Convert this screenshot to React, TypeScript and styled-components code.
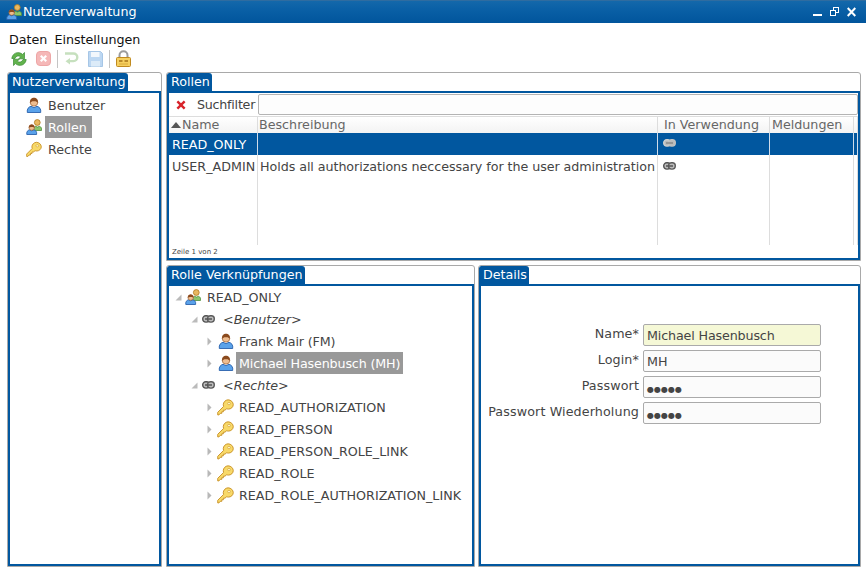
import React from "react";
import styled, { createGlobalStyle } from "styled-components";

const BLUE = "#01579f";

const Global = createGlobalStyle`
  html, body { margin: 0; padding: 0; background: #fff; }
  body { font-family: "DejaVu Sans", Verdana, sans-serif; font-size: 12.7px; color: #444; }
`;

const Page = styled.div`
  width: 866px; height: 573px; display: flex; flex-direction: column; overflow: hidden; background: #fff;
`;
const TitleBar = styled.div`
  height: 23px; flex: none; display: flex; align-items: center; padding: 0 6px; gap: 1px;
  background: linear-gradient(#4a7096 0, #1468aa 1px, #0a60a6 40%, #01559c 100%);
  color: #fff;
`;
const TitleText = styled.span`flex: 1; line-height: 23px;`;
const WinButtons = styled.div`display: flex; align-items: center; gap: 8px; margin-right: 4px;`;
const MenuBar = styled.div`
  display: flex; gap: 7px; padding: 9px 9px 0; height: 15px; flex: none; line-height: 15px; color: #111;
`;
const ToolBar = styled.div`
  display: flex; align-items: center; padding: 1px 0 0 11px; height: 21px; flex: none;
`;
const ToolBtn = styled.div<{ $w: number }>`
  width: ${(p) => p.$w}px; height: 18px; display: flex; align-items: center; flex: none;
`;
const ToolSep = styled.div`width: 1px; height: 18px; background: #c4c4c4; margin: 0 6px;`;

const Main = styled.div`
  flex: 1; display: grid; grid-template-columns: 155px 695px; gap: 4px; padding: 3px 0 6px 7px; min-height: 0;
`;
const RightCol = styled.div`
  display: grid; grid-template-rows: 189px 1fr; gap: 4px; min-height: 0;
`;
const BottomRow = styled.div`
  display: grid; grid-template-columns: 309px 383px; gap: 3px; min-height: 0;
`;
const Panel = styled.section`
  display: flex; flex-direction: column; border: 1px solid #a9a9a9; border-radius: 3px 3px 0 0;
  min-height: 0; min-width: 0; overflow: hidden; background: #fff;
`;
const TabRow = styled.div`
  height: 18px; display: flex; flex: none;
`;
const Tab = styled.div`
  background: ${BLUE}; color: #fff; padding: 0 2px 0 4px; line-height: 18px; height: 18px;
  border-top-left-radius: 2px; border-top-right-radius: 3px; white-space: nowrap;
`;
const PanelBody = styled.div`
  flex: 1; border: 2px solid ${BLUE}; min-height: 0; display: flex; flex-direction: column;
  background: #fff; overflow: hidden;
`;

const NavList = styled.div`display: flex; flex-direction: column; padding: 1px 0 0 16px;`;
const NavRow = styled.div`height: 22px; display: flex; align-items: center; gap: 3px;`;
const NavIcon = styled.div`width: 16px; flex: none; display: flex; align-items: center;`;
const NavLabel = styled.span<{ $sel?: boolean }>`
  padding: 0 5px 0 3px; height: 22px; line-height: 24px;
  background: ${(p) => (p.$sel ? "#999" : "transparent")}; color: ${(p) => (p.$sel ? "#fff" : "#444")};
`;

const FilterBar = styled.div`
  height: 24px; flex: none; display: flex; align-items: center; box-sizing: border-box; border-bottom: 1px solid #ddd; padding-left: 7px;
`;
const FilterX = styled.div`width: 21px; display: flex; align-items: center; flex: none;`;
const FilterLabel = styled.span`margin: 0 3px 1px 0; letter-spacing: -0.25px;`;
const FilterInput = styled.div`
  flex: 1; height: 21px; border: 1px solid #b4b4b4; border-radius: 2px; background: #fdfdfd; box-sizing: border-box;
`;
const Table = styled.div`
  display: grid; grid-template-columns: 89px 400px 112px 84px 4px; flex: none;
`;
const HeadCell = styled.div<{ $pad?: number }>`
  height: 16px; line-height: 16px; padding-left: ${(p) => p.$pad ?? 2}px; color: #666; border-right: 1px solid #ddd; white-space: nowrap;
  background: linear-gradient(#fff, #f3f3f3); overflow: hidden; display: flex; align-items: center;
`;
const SortArrow = styled.span`
  width: 0; height: 0; border: 5px solid transparent; border-bottom: 6px solid #555; border-top: 0; margin-right: 1px;
`;
const Cell = styled.div<{ $sel?: boolean; $h: number; $pad?: number }>`
  height: ${(p) => p.$h}px; line-height: 24px; padding-left: ${(p) => p.$pad ?? 3}px;
  white-space: nowrap; overflow: hidden; box-sizing: border-box;
  border-right: 1px solid ${(p) => (p.$sel ? "#cfdcea" : "#ddd")};
  background: ${(p) => (p.$sel ? BLUE : "#fff")}; color: ${(p) => (p.$sel ? "#fff" : "#444")};
`;
const DescText = styled.span`letter-spacing: -0.06px;`;
const LinkCell = styled(Cell)`
  display: flex; align-items: flex-start; padding-left: 5px; padding-top: ${(p) => (p.$sel ? 6 : 7)}px;
`;
const FootText = styled.div`
  font-size: 7px; height: 14px; line-height: 14px; padding-left: 3px; color: #444; margin-top: auto;
`;

const Tree = styled.div`display: flex; flex-direction: column;`;
const TreeRow = styled.div<{ $level: number }>`
  height: 22px; display: flex; align-items: center; padding-left: ${(p) => 6 + p.$level * 16}px; white-space: nowrap;
`;
const Twisty = styled.div`width: 10px; display: flex; align-items: center; flex: none;`;
const TreeIcon = styled.div<{ $off?: number }>`
  width: 19px; box-sizing: border-box; padding-left: ${(p) => p.$off ?? 0}px; display: flex; align-items: center; flex: none;
`;
const TreeLabel = styled.span<{ $sel?: boolean; $group?: boolean }>`
  padding: 0 3px; height: 22px; line-height: 24px;
  font-style: ${(p) => (p.$group ? "italic" : "normal")};
  background: ${(p) => (p.$sel ? "#999" : "transparent")}; color: ${(p) => (p.$sel ? "#fff" : "#444")};
`;
const NameText = styled.span`letter-spacing: -0.14px;`;

const Form = styled.div`
  display: grid; grid-template-columns: 153px 178px; column-gap: 4px; row-gap: 4px; padding: 38px 0 0 5px;
`;
const FieldLabel = styled.label`
  text-align: right; color: #444; line-height: 22px; white-space: nowrap; height: 22px; margin-top: -1px; letter-spacing: 0.12px;
`;
const Field = styled.div<{ $req?: boolean }>`
  height: 22px; box-sizing: border-box; border: 1px solid #aaa; border-radius: 2px; padding-left: 3px; line-height: 21px;
  background: ${(p) => (p.$req ? "#f5f8d6" : "#fbfbfb")}; color: #444;
`;
const PassDots = styled.span`font-size: 8px; line-height: 21px; color: #444;`;

const Person = () => (
  <svg width="16" height="16" viewBox="0 0 16 16">
    <path d="M1.300 15.500c-.6-3.700 1.400-5.600 3.700-6.200l3 1.300 3-1.300c2.300.6 4.300 2.500 3.700 6.200z" fill="#5aa2ea" stroke="#2a62ad" strokeWidth=".9" />
    <circle cx="8" cy="5.300" r="3.800" fill="#eebd90" stroke="#9a5c2c" strokeWidth=".7" />
    <path d="M4.200 6C3.600 2.500 5.800.7 8 .7s4.400 1.800 3.800 5.300C11 4.500 9.500 4 8 4.200 6.500 4 5 4.500 4.200 6z" fill="#8a4a1e" />
  </svg>
);
const Roles = () => (
  <svg width="16" height="16" viewBox="0 0 16 16">
    <path d="M7.500 11.500c-.3-2.500 1-3.800 2-4.200l2 .8 2-.8c1.300.4 2.500 1.700 2 4.200z" fill="#8cc56c" stroke="#4e9040" strokeWidth=".8" />
    <circle cx="11.300" cy="3.500" r="2.900" fill="#e8b860" stroke="#b07820" strokeWidth=".8" />
    <path d="M.8 15.500c-.5-2.800 1-4.300 2.700-4.700l2.200 1 2.200-1c1.700.4 3.200 1.900 2.700 4.700z" fill="#5aa2ea" stroke="#2a62ad" strokeWidth=".9" />
    <circle cx="5.700" cy="8.500" r="2.800" fill="#eebd90" stroke="#9a5c2c" strokeWidth=".6" />
    <path d="M2.900 8.800C2.600 6.500 4.300 5.400 5.700 5.400s3.100 1.100 2.800 3.400C7.500 7.700 4 7.700 2.900 8.800z" fill="#8a4a1e" />
  </svg>
);
const Key = () => (
  <svg width="17" height="17" viewBox="0 0 16 16">
    <path d="M10.500.8c2.600 0 4.800 2.200 4.800 4.500s-2.200 4.200-4.500 4.200c-.7 0-1.200-.1-1.700-.3L7.500 10.500H6V12H4.500v1.500H3L1.800 15H.7v-2.500L6.200 7c-.2-.5-.3-1-.3-1.600C5.900 3 8 .8 10.500.8z" fill="#f8d968" stroke="#c8922a" strokeWidth=".9" />
    <ellipse cx="11.300" cy="4.300" rx="1.400" ry="1.100" fill="#fff6c4" stroke="#c8922a" strokeWidth=".5" />
  </svg>
);
const Chain = ({ light }: { light?: boolean }) => (
  <svg width="13" height="8" viewBox="0 0 13 8">
    <rect x=".7" y=".8" width="6.800" height="6.300" rx="3" fill="#bbb" stroke={light ? "#d0d0d0" : "#555"} strokeWidth="1.400" />
    <rect x="5.500" y=".8" width="6.800" height="6.300" rx="3" fill="#bbb" stroke={light ? "#c0c0c0" : "#5c5c5c"} strokeWidth="1.400" />
    <path d="M3 4h7" stroke={light ? "#8a8a8a" : "#555"} strokeWidth="1.300" />
  </svg>
);
const Twist = ({ open }: { open?: boolean }) =>
  open ? (
    <svg width="7" height="7" viewBox="0 0 7 7"><path d="M6.500.5v6h-6z" fill="#bbb" /></svg>
  ) : (
    <svg width="5" height="9" viewBox="0 0 5 9"><path d="M.5.5l4 4-4 4z" fill="#b8b8b8" /></svg>
  );
const RedX = () => (
  <svg width="10" height="10" viewBox="0 0 10 10"><path d="M.5 2.200L2.200.5 5 3.300 7.800.5 9.500 2.200 6.700 5l2.800 2.800-1.700 1.700L5 6.700 2.200 9.500.5 7.800 3.300 5z" fill="#d8232a" /></svg>
);
const Refresh = () => (
  <svg width="16" height="16" viewBox="0 0 16 16">
    <path d="M.8 7.500C1.300 3.500 4.500 1.200 8 1.700c1.500.2 2.600.8 3.500 1.700L13.500 1.500v6.300H7.700L9.700 5.800C8.800 5 7.300 4.600 6 5.200 5 5.700 4.300 6.500 4 7.500z" fill="#62b34c" stroke="#3a8a33" strokeWidth=".7" />
    <path d="M15.200 8.500c-.5 4-3.700 6.300-7.200 5.800-1.500-.2-2.600-.8-3.500-1.700L2.500 14.500V8.200h5.800l-2 2c.9.800 2.400 1.200 3.700.6 1-.5 1.700-1.300 2-2.300z" fill="#62b34c" stroke="#3a8a33" strokeWidth=".7" />
  </svg>
);
const StopOff = () => (
  <svg width="15" height="15" viewBox="0 0 15 15">
    <rect x=".5" y=".5" width="14" height="14" rx="3.500" fill="#f5b8b8" stroke="#eda6a6" />
    <path d="M4 5.500l1.500-1.500 2 2 2-2 1.500 1.500-2 2 2 2-1.500 1.500-2-2-2 2L4 9.500l2-2z" fill="#fff" />
  </svg>
);
const UndoOff = () => (
  <svg width="15" height="15" viewBox="0 0 15 15">
    <path d="M1 2.500h8.500a3.800 3.800 0 0 1 0 7.600H5" fill="none" stroke="#c6e0be" strokeWidth="2.400" />
    <path d="M6 7v6.500L1.500 10.200z" fill="#c6e0be" />
  </svg>
);
const SaveOff = () => (
  <svg width="15" height="16" viewBox="0 0 15 16">
    <path d="M.5.500h12l2 2v13H.5z" fill="#bcd7f2" stroke="#a6c6e6" />
    <rect x="3" y="1" width="8.500" height="5" fill="#f2f7fc" />
    <rect x="3" y="10" width="9" height="5.500" fill="#dcebf8" />
  </svg>
);
const Lock = () => (
  <svg width="15" height="17" viewBox="0 0 15 17">
    <path d="M3.500 8V5.200a4 4 0 0 1 8 0V8" fill="none" stroke="#9c9c9c" strokeWidth="2" />
    <rect x=".5" y="7.500" width="14" height="9" rx="1" fill="#f6d060" stroke="#c08a20" />
    <rect x="3" y="10" width="3.500" height="2" fill="#b98a2a" />
    <rect x="8.500" y="10" width="3.500" height="2" fill="#b98a2a" />
    <rect x="3" y="13.500" width="9" height="1" fill="#d9a93a" />
  </svg>
);

const people = ["Frank Mair (FM)", "Michael Hasenbusch (MH)"];
const rights = ["READ_AUTHORIZATION", "READ_PERSON", "READ_PERSON_ROLE_LINK", "READ_ROLE", "READ_ROLE_AUTHORIZATION_LINK"];

export default function App() {
  return (
    <Page>
      <Global />
      <TitleBar>
        <Roles />
        <TitleText>Nutzerverwaltung</TitleText>
        <WinButtons>
          <svg width="9" height="10" viewBox="0 0 9 10"><rect x="0" y="7" width="9" height="2" fill="#fff" /></svg>
          <svg width="9" height="10" viewBox="0 0 9 10"><rect x="3.500" y=".5" width="5" height="5" fill="none" stroke="#fff" /><rect x=".5" y="3.500" width="5" height="5" fill="#01589f" stroke="#fff" /></svg>
          <svg width="9" height="10" viewBox="0 0 9 10"><path d="M.7 1l7.600 8M8.300 1L.7 9" stroke="#fff" strokeWidth="2" /></svg>
        </WinButtons>
      </TitleBar>
      <MenuBar><span>Daten</span><span>Einstellungen</span></MenuBar>
      <ToolBar>
        <ToolBtn $w={25}><Refresh /></ToolBtn>
        <ToolBtn $w={15}><StopOff /></ToolBtn>
        <ToolSep />
        <ToolBtn $w={24}><UndoOff /></ToolBtn>
        <ToolBtn $w={15}><SaveOff /></ToolBtn>
        <ToolSep />
        <ToolBtn $w={15}><Lock /></ToolBtn>
      </ToolBar>
      <Main>
        <Panel>
          <TabRow><Tab>Nutzerverwaltung</Tab></TabRow>
          <PanelBody>
            <NavList>
              <NavRow><NavIcon><Person /></NavIcon><NavLabel>Benutzer</NavLabel></NavRow>
              <NavRow><NavIcon><Roles /></NavIcon><NavLabel $sel>Rollen</NavLabel></NavRow>
              <NavRow><NavIcon><Key /></NavIcon><NavLabel>Rechte</NavLabel></NavRow>
            </NavList>
          </PanelBody>
        </Panel>
        <RightCol>
          <Panel>
            <TabRow><Tab>Rollen</Tab></TabRow>
            <PanelBody>
              <FilterBar>
                <FilterX><RedX /></FilterX>
                <FilterLabel>Suchfilter</FilterLabel>
                <FilterInput />
              </FilterBar>
              <Table>
                <HeadCell><SortArrow />Name</HeadCell>
                <HeadCell $pad={1}>Beschreibung</HeadCell>
                <HeadCell $pad={6}>In Verwendung</HeadCell>
                <HeadCell>Meldungen</HeadCell>
                <HeadCell $pad={0} />
                <Cell $sel $h={22}>READ_ONLY</Cell>
                <Cell $sel $h={22} $pad={2} />
                <LinkCell $sel $h={22}><Chain light /></LinkCell>
                <Cell $sel $h={22} />
                <Cell $sel $h={22} $pad={0} />
                <Cell $h={90}>USER_ADMIN</Cell>
                <Cell $h={90} $pad={2}><DescText>Holds all authorizations neccessary for the user administration</DescText></Cell>
                <LinkCell $h={90}><Chain /></LinkCell>
                <Cell $h={90} />
                <Cell $h={90} $pad={0} />
              </Table>
              <FootText>Zeile 1 von 2</FootText>
            </PanelBody>
          </Panel>
          <BottomRow>
            <Panel>
              <TabRow><Tab>Rolle Verknüpfungen</Tab></TabRow>
              <PanelBody>
                <Tree>
                  <TreeRow $level={0}>
                    <Twisty><Twist open /></Twisty><TreeIcon><Roles /></TreeIcon><TreeLabel>READ_ONLY</TreeLabel>
                  </TreeRow>
                  <TreeRow $level={1}>
                    <Twisty><Twist open /></Twisty><TreeIcon $off={1}><Chain /></TreeIcon><TreeLabel $group>&lt;Benutzer&gt;</TreeLabel>
                  </TreeRow>
                  {people.map((p, i) => (
                    <TreeRow $level={2} key={p}>
                      <Twisty><Twist /></Twisty><TreeIcon $off={1}><Person /></TreeIcon>
                      <TreeLabel $sel={i === 1}><NameText>{p}</NameText></TreeLabel>
                    </TreeRow>
                  ))}
                  <TreeRow $level={1}>
                    <Twisty><Twist open /></Twisty><TreeIcon $off={1}><Chain /></TreeIcon><TreeLabel $group>&lt;Rechte&gt;</TreeLabel>
                  </TreeRow>
                  {rights.map((r) => (
                    <TreeRow $level={2} key={r}>
                      <Twisty><Twist /></Twisty><TreeIcon><Key /></TreeIcon><TreeLabel>{r}</TreeLabel>
                    </TreeRow>
                  ))}
                </Tree>
              </PanelBody>
            </Panel>
            <Panel>
              <TabRow><Tab>Details</Tab></TabRow>
              <PanelBody>
                <Form>
                  <FieldLabel>Name*</FieldLabel><Field $req><NameText>Michael Hasenbusch</NameText></Field>
                  <FieldLabel>Login*</FieldLabel><Field>MH</Field>
                  <FieldLabel>Passwort</FieldLabel><Field><PassDots>●●●●●</PassDots></Field>
                  <FieldLabel>Passwort Wiederholung</FieldLabel><Field><PassDots>●●●●●</PassDots></Field>
                </Form>
              </PanelBody>
            </Panel>
          </BottomRow>
        </RightCol>
      </Main>
    </Page>
  );
}
